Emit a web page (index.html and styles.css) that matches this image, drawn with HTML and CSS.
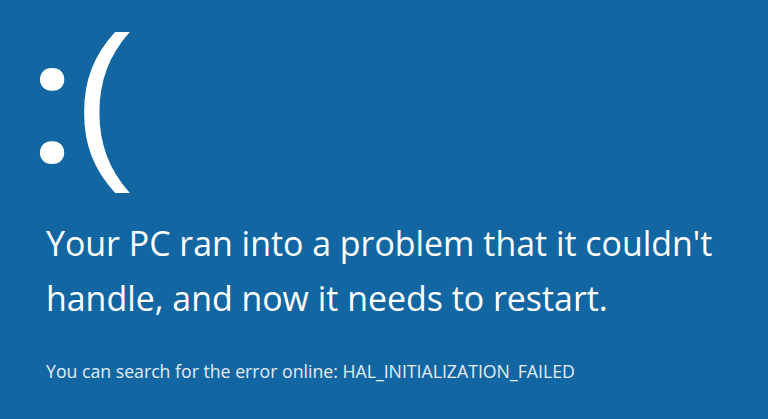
FILE: index.html
```html
<!DOCTYPE html>
<html lang="en">
<head>
<meta charset="utf-8">
<title>Your PC ran into a problem</title>
<link rel="stylesheet" href="styles.css">
</head>
<body>
<main class="screen">
  <div class="frown"><span class="colon">:</span><span class="paren">(</span></div>
  <p class="message">Your PC ran into a problem that it couldn't<br>handle, and now it needs to restart.</p>
  <p class="code">You can search for the error online: HAL_INITIALIZATION_FAILED</p>
</main>
</body>
</html>
```
FILE: styles.css
```css
html, body {
  margin: 0;
  padding: 0;
  width: 768px;
  height: 419px;
  overflow: hidden;
  background: #1267a2;
}
.screen {
  box-sizing: border-box;
  width: 768px;
  height: 419px;
  padding: 0 0 0 46px;
  color: #ffffff;
  font-family: "Open Sans", "Noto Sans", sans-serif;
  display: flex;
  flex-direction: column;
}
.frown {
  display: flex;
  align-items: flex-start;
  height: 207px;
  flex: none;
}
.colon {
  font-family: Roboto, "Open Sans", sans-serif;
  font-size: 176px;
  line-height: 207px;
  font-weight: 500;
  margin-left: -17px;
}
.paren {
  font-family: "Liberation Sans", Arial, sans-serif;
  font-size: 172px;
  line-height: 194px;
  font-weight: 400;
  margin-left: -2px;
}
.message {
  margin: 9px 0 0 0;
  font-size: 33.9px;
  line-height: 55px;
  font-weight: 400;
}
.code {
  margin: 33px 0 0 0;
  font-size: 17.7px;
  line-height: 24px;
  color: #e4ecf4;
}
```
